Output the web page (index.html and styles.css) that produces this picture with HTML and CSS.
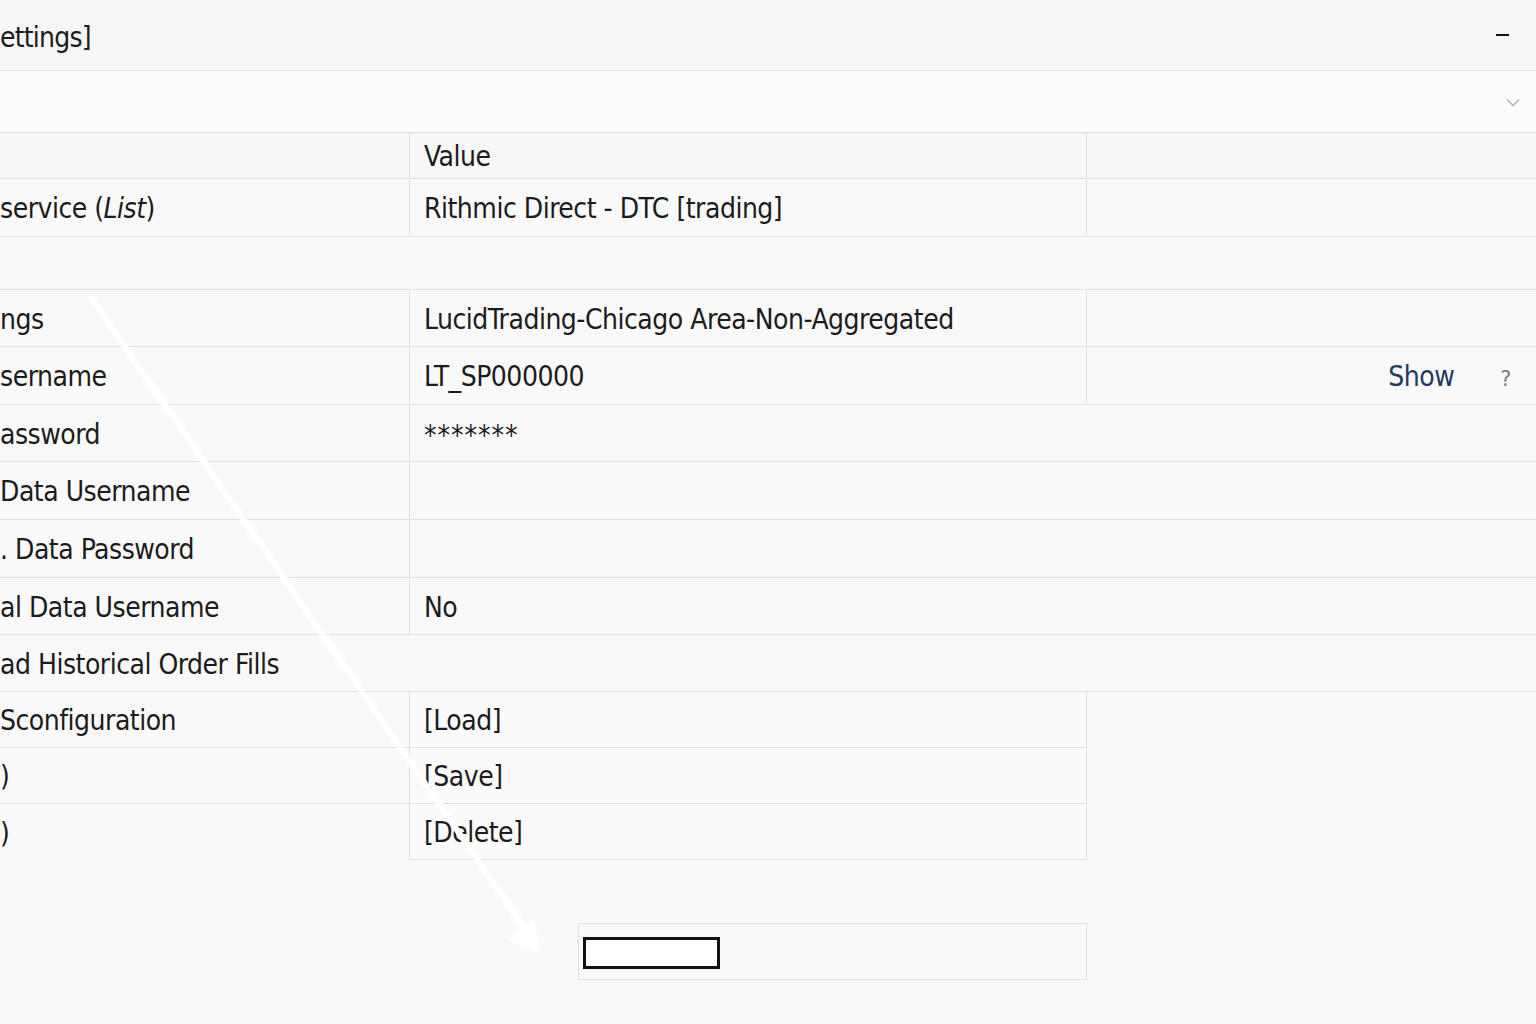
FILE: index.html
```html
<!DOCTYPE html>
<html lang="en">
<head>
<meta charset="utf-8">
<title>Settings</title>
<link rel="stylesheet" href="styles.css">
</head>
<body>
<div class="window">
  <header class="titlebar">
    <span class="title">ettings]</span>
    <span class="minimize" aria-label="Minimize"></span>
  </header>
  <div class="dropdown">
    <svg class="chevron" width="14" height="9" viewBox="0 0 14 9"><path d="M1 1.5 L7 7.5 L13 1.5" fill="none" stroke="#b0b0b0" stroke-width="1.4"/></svg>
  </div>

  <div class="table">
    <div class="row head">
      <div class="cell label"></div>
      <div class="cell value">Value</div>
      <div class="cell extra"></div>
    </div>
    <div class="row r58">
      <div class="cell label">service (<i>List</i>)</div>
      <div class="cell value">Rithmic Direct - DTC [trading]</div>
      <div class="cell extra"></div>
    </div>
    <div class="row blank"></div>
    <div class="row">
      <div class="cell label">ngs</div>
      <div class="cell value">LucidTrading-Chicago Area-Non-Aggregated</div>
      <div class="cell extra"></div>
    </div>
    <div class="row r58">
      <div class="cell label">sername</div>
      <div class="cell value">LT_SP000000</div>
      <div class="cell extra actions"><span class="show">Show</span><span class="help">?</span></div>
    </div>
    <div class="row">
      <div class="cell label">assword</div>
      <div class="cell value wide stars">*******</div>
    </div>
    <div class="row r58">
      <div class="cell label">Data Username</div>
      <div class="cell value wide"></div>
    </div>
    <div class="row r58">
      <div class="cell label">. Data Password</div>
      <div class="cell value wide"></div>
    </div>
    <div class="row">
      <div class="cell label">al Data Username</div>
      <div class="cell value wide">No</div>
    </div>
    <div class="row">
      <div class="cell full">ad Historical Order Fills</div>
    </div>
    <div class="row boxrow">
      <div class="cell label">Sconfiguration</div>
      <div class="cell value boxed">[Load]</div>
    </div>
    <div class="row boxrow">
      <div class="cell label">)</div>
      <div class="cell value boxed">[Save]</div>
    </div>
    <div class="row boxrow last">
      <div class="cell label">)</div>
      <div class="cell value boxed">[Delete]</div>
    </div>
  </div>

  <div class="footer">
    <div class="footbox">
      <div class="field"></div>
    </div>
  </div>

  <svg class="arrow" width="1536" height="1024" viewBox="0 0 1536 1024">
    <line x1="92" y1="299" x2="523" y2="926" stroke="#ffffff" stroke-width="6" stroke-linecap="round"/>
    <polygon points="507,940 534,919 541,953" fill="#ffffff"/>
  </svg>
</div>
</body>
</html>
```

FILE: styles.css
```css
html, body {
  margin: 0;
  padding: 0;
}

body {
  background: #f9f9f9;
  font-family: "DejaVu Sans Condensed", "DejaVu Sans", "Liberation Sans", sans-serif;
  font-stretch: condensed;
  color: #1c1c1c;
  overflow: hidden;
}

.window {
  position: relative;
  width: 1536px;
  height: 1024px;
}

.titlebar {
  height: 71px;
  box-sizing: border-box;
  background: #f6f6f6;
  border-bottom: 1px solid #dfdfdf;
  display: flex;
  align-items: center;
  justify-content: space-between;
  padding-right: 27px;
}

.title {
  font-size: 28px;
  letter-spacing: -0.8px;
  line-height: 1;
  margin-top: 5px;
}

.minimize {
  width: 13px;
  height: 2px;
  background: #111;
}

.dropdown {
  height: 62px;
  box-sizing: border-box;
  background: #fcfcfc;
  border-bottom: 1px solid #dfdfdf;
  display: flex;
  align-items: center;
  justify-content: flex-end;
  padding-right: 16px;
}

.chevron {
  display: block;
  margin-top: 2px;
}

.table {
  display: flex;
  flex-direction: column;
}

.row {
  display: flex;
  height: 57px;
  box-sizing: border-box;
  border-bottom: 1px solid #e0e0e0;
  font-size: 28px;
  letter-spacing: -0.5px;
}

.row.r58 {
  height: 58px;
}

.row.head {
  height: 46px;
  background: #f7f7f7;
}

.row.blank {
  height: 53px;
}

.cell {
  display: flex;
  align-items: center;
  box-sizing: border-box;
  white-space: nowrap;
  padding-top: 2px;
}

.cell.label {
  width: 410px;
  flex: none;
  border-right: 1px solid #e0e0e0;
  padding-left: 0;
}

.cell.value {
  width: 677px;
  flex: none;
  border-right: 1px solid #e0e0e0;
  padding-left: 14px;
}

.cell.value.wide {
  flex: 1;
  border-right: none;
}

.cell.extra {
  flex: 1;
}

.cell.full {
  flex: 1;
}

.stars {
  align-items: flex-start;
  padding-top: 14px;
  letter-spacing: 0.9px;
}

.actions {
  justify-content: flex-end;
  padding-right: 25px;
}

.show {
  color: #1f3a62;
  margin-right: 3px;
}

.help {
  color: #7d7d7d;
  font-family: "DejaVu Sans", sans-serif;
  font-stretch: normal;
  font-size: 21px;
  margin-left: 43px;
  margin-top: 4px;
}

.row.boxrow {
  height: 56px;
  border-bottom: none;
}

.row.boxrow .label {
  border-bottom: 1px solid #e0e0e0;
}

.row.boxrow.last .label {
  border-bottom: none;
}

.cell.boxed {
  border-bottom: 1px solid #e0e0e0;
  background: #fafafa;
}

.footer {
  width: 1087px;
  display: flex;
  justify-content: flex-end;
  margin-top: 63px;
}

.footbox {
  width: 509px;
  height: 57px;
  box-sizing: border-box;
  border: 1px solid #e2e2e2;
  background: #f9f9f9;
  padding: 13px 0 0 4px;
}

.field {
  width: 137px;
  height: 32px;
  box-sizing: border-box;
  border: 3px solid #111;
  background: #ffffff;
}

.arrow {
  position: absolute;
  left: 0;
  top: 0;
  pointer-events: none;
}
```
